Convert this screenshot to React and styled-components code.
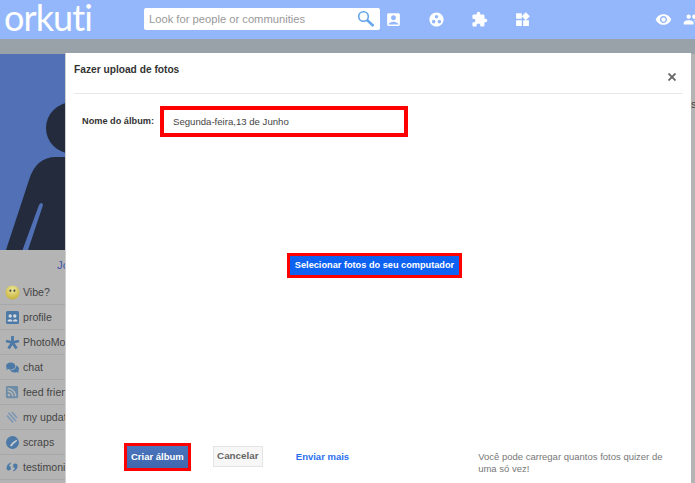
import React from "react";
import styled, { createGlobalStyle } from "styled-components";
import { MdAccountBox, MdExtension, MdWidgets, MdVisibility, MdPeople, MdGroupWork } from "react-icons/md";
import { FaComments, FaRssSquare } from "react-icons/fa";

const Global = createGlobalStyle`
  html, body { margin: 0; padding: 0; }
  body { width: 695px; height: 483px; overflow: hidden; font-family: "Liberation Sans", Arial, sans-serif; }
  * { box-sizing: border-box; }
`;
const Page = styled.div`
  width: 695px; height: 483px; overflow: hidden; display: flex; flex-direction: column; background: #9aa2a9;
`;
const Header = styled.header`
  height: 39px; flex: none; background: #94b7fb; display: flex; align-items: center; overflow: hidden;
`;
const Logo = styled.div`
  width: 144px; flex: none; padding-left: 4px; color: #fff; font: 400 36px/36px Lato, sans-serif; letter-spacing: -.9px; margin-top: -5px;
`;
const Search = styled.div`
  width: 236px; height: 22px; flex: none; background: #fff; border-radius: 2px; display: flex; align-items: center; justify-content: space-between; padding: 0 4px 0 5px;
  color: #999; font-size: 11.2px; margin-top: -1px; white-space: nowrap;
`;
const Nav = styled.nav`
  display: flex; align-items: center; margin-left: -8px; color: #fff; margin-top: -1px;
`;
const NavIcon = styled.span`
  width: 43px; display: flex; justify-content: center; font-size: 17px;
`;
const Right = styled.div`
  display: flex; align-items: center; gap: 11px; color: #fff; margin-left: auto; margin-right: -5px; margin-top: -1px; flex: none;
`;
const Stage = styled.main`
  flex: 1; position: relative; padding-top: 15px; display: flex; justify-content: space-between; min-height: 0;
`;
const Side = styled.aside`
  width: 65px; flex: none; display: flex; flex-direction: column; background: #b4b4b4; overflow: hidden;
`;
const Rail = styled.aside`
  width: 4px; flex: none; background: #b4b4b4; color: #444; font-size: 11px; padding-top: 44px; overflow: hidden;
`;
const Photo = styled.div`
  height: 196px; flex: none; background: #5170b5; overflow: hidden;
  svg { display: block; }
`;
const Name = styled.div`
  height: 30px; flex: none; color: #3f55a8; font-size: 11.5px; padding: 9px 0 0 57px; white-space: nowrap;
`;
const Row = styled.div`
  height: 25px; flex: none; display: flex; align-items: center; border-bottom: 1px solid #a8a8a8;
  color: #454545; font-size: 10.6px; white-space: nowrap; padding-left: 1px;
`;
const RowIcon = styled.span`
  width: 22px; flex: none; display: flex; justify-content: center; color: ${p => p.$color || "#4c79a6"}; font-size: ${p => p.$size || 15}px;
`;
const Modal = styled.section`
  position: absolute; left: 65px; top: 14px; width: 626px; height: 430px; background: #fff; padding: 0 0 0 8px;
  display: flex; flex-direction: column; border-left: 1px solid #d0d0d0;
`;
const ModalHead = styled.div`
  height: 41px; flex: none; margin-right: 8px; border-bottom: 1px solid #e8e8e8; display: flex; justify-content: space-between;
  color: #333; font-size: 10.2px; font-weight: bold; padding-top: 11px;
`;
const CloseMark = styled.svg`
  width: 8px; height: 8px; margin: 9px 7px 0 0; flex: none;
`;
const NameRow = styled.div`
  display: flex; align-items: center; margin-top: 12px; padding-left: 8px;
`;
const Label = styled.label`
  width: 78px; flex: none; color: #333; font-size: 9.2px; font-weight: bold; margin-top: -2px; white-space: nowrap;
`;
const NameInput = styled.div`
  width: 248px; height: 31px; border: 4px solid #f00; color: #444; font-size: 9.6px; padding: 6px 0 0 9px; background: #fff;
`;
const Center = styled.div`
  flex: 1; display: flex; align-items: center; justify-content: center; padding: 0 16px 49px 0;
`;
const Highlight = styled.span`
  display: inline-flex; flex: none; border: 3px solid #f00; height: ${p => p.$h}px;
`;
const Primary = styled.span`
  background: #0e62f2; color: #fff; font-size: 9.2px; font-weight: bold; padding: 0 4.5px; line-height: 19px; white-space: nowrap;
`;
const Footer = styled.div`
  display: flex; align-items: flex-start; height: 40px; flex: none; padding-left: 50px; white-space: nowrap;
`;
const Create = styled.span`
  background: linear-gradient(#4a74bc, #3f67ad); color: #fff; font-size: 9.5px; font-weight: bold; padding: 0 4px; line-height: 22px;
`;
const Cancel = styled.span`
  margin-left: 22px; margin-top: 3px; width: 50px; height: 21px; border: 1px solid #e4e4e4; background: #f7f7f7; color: #666; font-size: 9.8px; font-weight: bold; text-align: center; line-height: 18px; flex: none;
`;
const More = styled.span`
  margin-left: 33px; margin-top: 8px; color: #2b6ff0; font-size: 9.5px; font-weight: bold; line-height: 12px;
`;
const Note = styled.p`
  margin: 8px 0 0 129px; width: 195px; flex: none; color: #777; font-size: 9.5px; line-height: 12px; white-space: normal;
`;

const Figure = () => (
  <svg width="65" height="196" viewBox="0 0 65 196">
    <circle cx="71.500" cy="74" r="25.500" fill="#232b3c" />
    <path d="M6 196 L29 126 Q36 103 56 103 L65 103 V196 H28 L43 151 Q42 147 39 151 L22.500 196 Z" fill="#232b3c" />
  </svg>
);
const SearchGlyph = () => (
  <svg width="20" height="20" viewBox="0 0 20 20" fill="none" stroke="#64a5ee"><circle cx="7.500" cy="7.500" r="4.800" strokeWidth="1.600"/><path d="M11 11L17.500 17" strokeWidth="2.400"/></svg>
);
const Smiley = () => (
  <svg width="15" height="15" viewBox="0 0 16 16"><defs><radialGradient id="s" cx=".5" cy=".3" r=".8"><stop offset="0" stopColor="#ece89a"/><stop offset="1" stopColor="#c3aa2c"/></radialGradient></defs><circle cx="8" cy="8" r="7.500" fill="url(#s)"/><circle cx="5.800" cy="6" r="1.100" fill="#444"/><circle cx="10" cy="6" r="1.100" fill="#444"/></svg>
);
const ProfileIcon = () => (
  <svg width="13" height="13" viewBox="0 0 13 13"><rect width="13" height="13" rx="1.500" fill="#4c79a6"/><circle cx="4.200" cy="5" r="1.700" fill="#d5dbe0"/><circle cx="8.800" cy="5" r="1.700" fill="#d5dbe0"/><path d="M1.500 10.500c0-3 5-3 5 0zM7 10.500c0-3 4.500-3 4.500 0z" fill="#d5dbe0"/></svg>
);
const StarIcon = () => (
  <svg width="15" height="15" viewBox="0 0 15 15" fill="none" stroke="#4c79a6" strokeWidth="2.800"><path d="M7.500 1V8M7.500 7.500L1 6M7.500 7.500L14 6M7.500 7.500L3.500 13.500M7.500 7.500L11.500 13.500"/></svg>
);
const UpdateIcon = () => (
  <svg width="12" height="13" viewBox="0 0 12 13" fill="none" stroke="#7d97b4" strokeWidth="1.700"><path d="M1 4.500l6 7M2.500 1.800l7.500 8.500M6 1l5 6"/></svg>
);
const ScrapIcon = () => (
  <svg width="13" height="13" viewBox="0 0 13 13"><circle cx="6.500" cy="6.500" r="6.500" fill="#4c79a6"/><path d="M4 9.500 Q7 5 11.500 3.500 L10.500 5.500 Q7.500 7.500 5.500 10.500Z" fill="#c9cfd4"/></svg>
);
const QuoteIcon = () => (
  <svg width="12" height="10" viewBox="0 0 12 10" fill="#4c79a6"><path d="M4.800 0.500Q0.500 2 0.500 6.500a2.200 2.200 0 1 0 4.400-.5Q4.800 4 3 4Q3.300 2.500 4.800 1.500Z"/><path d="M7.200 9.500Q11.500 8 11.500 3.500a2.200 2.200 0 1 0-4.400 .5Q7.200 6 9 6Q8.700 7.500 7.200 8.500Z"/></svg>
);
const Rows = [
  [<Smiley />, "Vibe?"],
  [<ProfileIcon />, "profile"],
  [<StarIcon />, "PhotoMoments"],
  [<FaComments />, "chat", 13],
  [<FaRssSquare />, "feed friends", 14, "#6d8ca8"],
  [<UpdateIcon />, "my updates"],
  [<ScrapIcon />, "scraps"],
  [<QuoteIcon />, "testimonials"],
];

export default function App() {
  return (
    <Page>
      <Global />
      <Header>
        <Logo>orkuti</Logo>
        <Search>Look for people or communities<SearchGlyph /></Search>
        <Nav>
          <NavIcon><MdAccountBox /></NavIcon>
          <NavIcon><MdGroupWork /></NavIcon>
          <NavIcon><MdExtension /></NavIcon>
          <NavIcon><MdWidgets /></NavIcon>
        </Nav>
        <Right><MdVisibility size={17} /><MdPeople size={17} /></Right>
      </Header>
      <Stage>
        <Side>
          <Photo><Figure /></Photo>
          <Name>Jo</Name>
          {Rows.map(([icon, label, size, color]) => (
            <Row key={label}><RowIcon $size={size} $color={color}>{icon}</RowIcon>{label}</Row>
          ))}
        </Side>
        <Modal>
          <ModalHead>
            Fazer upload de fotos
            <CloseMark viewBox="0 0 8 8" fill="none" stroke="#666" strokeWidth="1.800"><path d="M.5 .5L7.500 7.500M7.500 .5L.5 7.500" /></CloseMark>
          </ModalHead>
          <NameRow><Label>Nome do álbum:</Label><NameInput>Segunda-feira,13 de Junho</NameInput></NameRow>
          <Center><Highlight $h={25}><Primary>Selecionar fotos do seu computador</Primary></Highlight></Center>
          <Footer>
            <Highlight $h={28}><Create>Criar álbum</Create></Highlight>
            <Cancel>Cancelar</Cancel>
            <More>Enviar mais</More>
            <Note>Você pode carregar quantos fotos quizer de uma só vez!</Note>
          </Footer>
        </Modal>
        <Rail>s</Rail>
      </Stage>
    </Page>
  );
}
